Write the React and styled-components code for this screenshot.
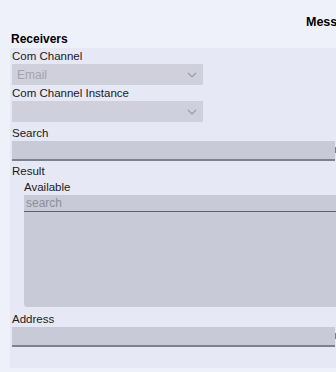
import React from "react";
import styled, { createGlobalStyle } from "styled-components";

const GlobalStyle = createGlobalStyle`
  html, body {
    margin: 0;
    padding: 0;
    background: #eff1fa;
  }
  body {
    font-family: "Liberation Sans", Arial, sans-serif;
  }
`;

export default function App() {
  return (
    <Page>
      <GlobalStyle />
      <Header>
        <Title>Message</Title>
      </Header>
      <SectionTitle>Receivers</SectionTitle>
      <Panel>
        <Label>Com Channel</Label>
        <Select>
          <SelectValue>Email</SelectValue>
          <Chevron />
        </Select>
        <Label top={1}>Com Channel Instance</Label>
        <Select>
          <SelectValue />
          <Chevron />
        </Select>
        <Label top={4}>Search</Label>
        <Input wide />
        <Label top={3}>Result</Label>
        <Result>
          <Label top={1}>Available</Label>
          <ListSearch>search</ListSearch>
          <List />
        </Result>
        <Label top={5}>Address</Label>
        <Input wide />
      </Panel>
    </Page>
  );
}

function Chevron() {
  return (
    <ChevronIcon viewBox="0 0 10 6" width="10" height="6">
      <path d="M1 1 L5 5 L9 1" fill="none" stroke="#9a9ca8" strokeWidth="1.2" />
    </ChevronIcon>
  );
}

const Page = styled.div`
  width: 336px;
  height: 372px;
  overflow: hidden;
  background: #eff1fa;
  color: #1c1c22;
`;

const Header = styled.div`
  height: 31px;
  padding-top: 14px;
  box-sizing: border-box;
  white-space: nowrap;
`;

const Title = styled.div`
  margin-left: 306px;
  font-weight: bold;
  font-size: 12.5px;
  line-height: 16px;
  color: #000;
`;

const SectionTitle = styled.div`
  padding-left: 11px;
  height: 17px;
  font-weight: bold;
  font-size: 12px;
  line-height: 17px;
  color: #000;
`;

const Panel = styled.div`
  margin-left: 10px;
  padding: 1px 0 21px 2px;
  background: #e6e8f5;
  height: 320px;
  box-sizing: border-box;
  display: flex;
  flex-direction: column;
  white-space: nowrap;
`;

const Label = styled.div`
  margin-top: ${(p) => p.top || 0}px;
  height: 15px;
  font-size: 11.5px;
  line-height: 15px;
  color: #1a1a20;
`;

const Select = styled.div`
  width: 191px;
  height: 21px;
  background: #cfd0dc;
  display: flex;
  align-items: center;
  justify-content: space-between;
  padding: 0 6px 0 5px;
  box-sizing: border-box;
`;

const SelectValue = styled.span`
  font-size: 12px;
  color: #a1a3af;
`;

const ChevronIcon = styled.svg`
  display: block;
`;

const Input = styled.div`
  width: 323px;
  height: 20px;
  background: #c8cad8;
  border-bottom: 2px solid #7f8190;
  box-sizing: border-box;
  position: relative;
  &::after {
    content: "";
    position: absolute;
    right: -1px;
    top: 6px;
    width: 1px;
    height: 6px;
    background: ${(p) => (p.wide ? "#6b77d8" : "transparent")};
  }
`;

const Result = styled.div`
  padding-left: 12px;
  display: flex;
  flex-direction: column;
`;

const ListSearch = styled.div`
  height: 17px;
  background: #c8cad8;
  border-bottom: 1px solid #5e606c;
  box-sizing: border-box;
  padding-left: 2px;
  font-size: 12px;
  line-height: 16px;
  color: #8c8e9a;
  width: 320px;
`;

const List = styled.div`
  height: 95px;
  width: 320px;
  background: #c8cad8;
  border-bottom-left-radius: 3px;
`;
